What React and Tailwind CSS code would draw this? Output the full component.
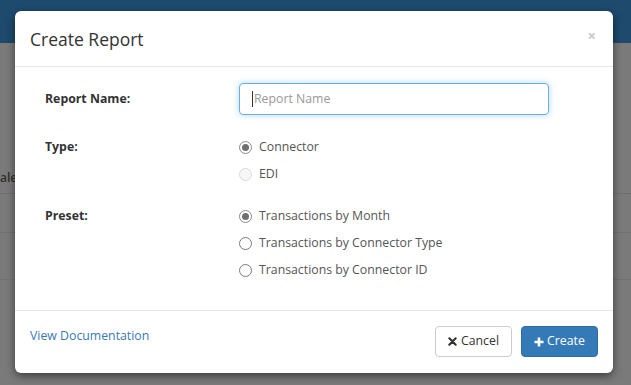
import React from "react";

function Radio({ checked, disabled, label }) {
  return (
    <div className="flex items-center h-[27px]">
      <span
        className={
          "w-[13px] h-[13px] rounded-full border flex items-center justify-center mr-[7px] " +
          (disabled
            ? "border-[#d9d9d9] bg-[#f7f7f7]"
            : checked
            ? "border-[#8a8a8a] bg-white"
            : "border-[#7a7a7a] bg-white")
        }
      >
        {checked && <span className="w-[7px] h-[7px] rounded-full bg-[#6f6f6f]" />}
      </span>
      <span className="text-[#555]">{label}</span>
    </div>
  );
}

export default function App() {
  return (
    <div
      className="relative w-[631px] h-[385px] overflow-hidden bg-[#7a7a7a] text-[12.3px]"
      style={{ fontFamily: '"Open Sans", "Noto Sans", sans-serif' }}
    >
      <div className="h-[43px] bg-[#1e4a6d]" />
      <div className="relative">
        <div className="absolute left-0 top-[126px] text-[#2f2f2f] font-semibold text-[12px]">ale</div>
        <div className="absolute left-0 right-0 top-[150px] border-t border-[#6e6e6e]" />
        <div className="absolute left-0 right-0 top-[189px] border-t border-[#707070]" />
        <div className="absolute left-0 right-0 top-[236px] border-t border-[#727272]" />
      </div>

      <div className="absolute left-[15px] top-[11px] w-[598px] h-[362px] bg-white rounded-[6px] shadow-[0_3px_9px_rgba(0,0,0,0.5)] flex flex-col">
        <div className="h-[56px] flex items-center justify-between px-[15px] border-b border-[#e5e5e5]">
          <div className="text-[17.5px] text-[#333] pt-[1px]">Create Report</div>
          <div className="text-[#c8c8c8] text-[15px] font-bold leading-none mr-[2px] -mt-[6px]">×</div>
        </div>

        <div className="flex-1 px-[30px] pt-[16px]">
          <div className="flex items-center">
            <div className="w-[194px] font-bold text-[#333]">Report Name:</div>
            <div className="w-[310px] h-[32px] rounded-[4px] border border-[#66afe9] shadow-[0_0_6px_rgba(102,175,233,0.5)] flex items-center px-[12px]">
              <span className="w-px h-[16px] bg-[#333] mr-[1px]" />
              <span className="text-[#999]">Report Name</span>
            </div>
          </div>

          <div className="flex mt-[19px]">
            <div className="w-[194px] font-bold text-[#333] h-[27px] flex items-center">Type:</div>
            <div className="flex flex-col">
              <Radio checked label="Connector" />
              <Radio disabled label="EDI" />
            </div>
          </div>

          <div className="flex mt-[15px]">
            <div className="w-[194px] font-bold text-[#333] h-[27px] flex items-center">Preset:</div>
            <div className="flex flex-col">
              <Radio checked label="Transactions by Month" />
              <Radio label="Transactions by Connector Type" />
              <Radio label="Transactions by Connector ID" />
            </div>
          </div>
        </div>

        <div className="h-[63px] border-t border-[#e5e5e5] px-[15px] pt-[15px] flex items-start justify-between">
          <div className="text-[#3a78b5] mt-[1px]">View Documentation</div>
          <div className="flex gap-[9px]">
            <div className="h-[31px] w-[77px] rounded-[4px] border border-[#ccc] bg-white text-[#333] flex items-center justify-center gap-[4px]">
              <svg width="9" height="9" viewBox="0 0 10 10">
                <path d="M1.5 1.5 L8.5 8.5 M8.5 1.5 L1.5 8.5" stroke="#333" strokeWidth="2.4" strokeLinecap="round" />
              </svg>
              <span>Cancel</span>
            </div>
            <div className="h-[31px] w-[77px] rounded-[4px] border border-[#2e6da4] bg-[#337ab7] text-white flex items-center justify-center gap-[3px]">
              <svg width="10" height="10" viewBox="0 0 10 10">
                <path d="M5 0.5 V9.5 M0.5 5 H9.5" stroke="#fff" strokeWidth="2.6" />
              </svg>
              <span>Create</span>
            </div>
          </div>
        </div>
      </div>
    </div>
  );
}
